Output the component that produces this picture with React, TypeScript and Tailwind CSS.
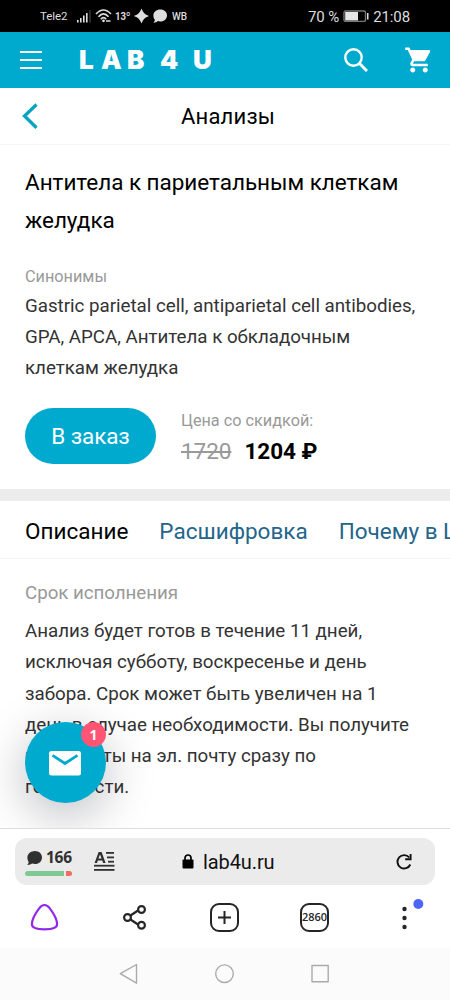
import React from "react";

const synonyms = [
  "Gastric parietal cell, antiparietal cell antibodies,",
  "GPA, APCA, Антитела к обкладочным",
  "клеткам желудка",
];

const description = [
  "Анализ будет готов в течение 11 дней,",
  "исключая субботу, воскресенье и день",
  "забора. Срок может быть увеличен на 1",
  "день в случае необходимости. Вы получите",
  "результаты на эл. почту сразу по",
  "готовности.",
];

function StatusBar() {
  return (
    <div className="flex h-8 shrink-0 items-center bg-black pl-10 text-[#dedede]">
      <span className="w-[37px] pt-px text-[11.500px] tracking-[-0.1px]">Tele2</span>
      <svg className="h-8 w-[90px] shrink-0" viewBox="77 0 90 32" fill="#dedede">
        <rect x="77" y="20" width="1.6" height="2.5" />
        <rect x="80" y="18" width="1.6" height="4.5" />
        <rect x="83" y="15.5" width="1.6" height="7" />
        <rect x="86" y="13" width="1.6" height="9.5" />
        <rect x="89.5" y="10" width="1" height="12.5" fill="#555" />
        <g fill="none" stroke="#dedede" strokeWidth="1.7">
          <path d="M96 14Q103.5 6 111 14" />
          <path d="M98.5 16.700Q103.5 11 108.500 16.700" />
          <path d="M100.8 19.200Q103.5 16.200 106.200 19.200" />
        </g>
        <circle cx="103.5" cy="20.8" r="1.4" />
        <path d="M106 21h4.500" stroke="#dedede" strokeWidth="1.500" fill="none" />
        <text x="115" y="20.300" fontSize="11.500" fontWeight="700" fontFamily="Roboto, sans-serif" textLength="15.500" lengthAdjust="spacingAndGlyphs">13º</text>
        <path d="M141.500 8.500C143.300 12.900 144.600 14.200 149 16C144.600 17.800 143.300 19.100 141.500 23.500C139.700 19.100 138.400 17.800 134 16C138.400 14.200 139.700 12.900 141.500 8.500Z" />
        <path d="M160.300 9.500c4 0 6.700 2.600 6.700 5.900 0 3.400-2.800 6-6.700 6-.9 0-1.800-.2-2.500-.4-1 1-2.500 1.700-4.500 1.700 1-.9 1.500-1.800 1.600-2.900-1-1.100-1.500-2.500-1.500-4.400 0-3.300 3-5.900 6.900-5.900Z" />
      </svg>
      <span className="ml-[5px] pt-px text-[10px] font-medium">WB</span>
      <div className="ml-auto flex items-center pr-[40px] text-[15px] leading-4 tracking-[-0.100px]">
        <span className="mr-[4px] pt-px whitespace-pre">70 %</span>
        <svg className="h-3 w-[26px]" viewBox="0 0 26 12">
          <rect x="1" y="1" width="21.500" height="10.500" rx="1.500" fill="none" stroke="#777" strokeWidth="1.400" />
          <rect x="2.200" y="2" width="12.800" height="8.500" fill="#e6e6e6" />
          <rect x="24" y="3" width="1.500" height="6.500" fill="#dedede" />
        </svg>
        <span className="ml-[4px] pt-px">21:08</span>
      </div>
    </div>
  );
}

function Header() {
  return (
    <header className="flex h-14 shrink-0 items-center bg-[#00aace] pl-5 text-white">
      <svg className="h-[19px] w-[22px]" viewBox="0 0 22 19" fill="white">
        <rect y="0" width="22" height="2" />
        <rect y="8" width="22" height="2" />
        <rect y="16" width="22" height="2" />
      </svg>
      <div className="ml-[37px] flex h-7 items-center font-['Inter',sans-serif] text-[26px] leading-7 font-black">
        <span className="w-[22px]">L</span>
        <span className="w-[26px]">A</span>
        <span className="w-[33px]">B</span>
        <span className="w-[33px]">4</span>
        <span className="w-[21px]">U</span>
      </div>
      <svg className="ml-[130px] h-6 w-6" viewBox="0 0 24 24" fill="none" stroke="white" strokeWidth="2.400">
        <circle cx="9.500" cy="9.500" r="8.200" />
        <path d="M15.500 15.500 23 23" strokeWidth="3" />
      </svg>
      <svg className="ml-[36px] h-[30px] w-[30px]" viewBox="0 0 24 24" fill="white">
        <path d="M7 18c-1.100 0-1.990.9-1.990 2S5.900 22 7 22s2-.9 2-2-.9-2-2-2zM1 2v2h2l3.600 7.590-1.350 2.450c-.16.280-.25.610-.25.960 0 1.100.9 2 2 2h12v-2H7.420c-.14 0-.25-.11-.25-.25l.03-.12.900-1.630h7.450c.75 0 1.410-.41 1.750-1.030l3.580-6.490A1.003 1.003 0 0 0 20 4H5.210l-.94-2H1zm16 16c-1.100 0-1.990.9-1.990 2s.89 2 1.990 2 2-.9 2-2-.9-2-2-2z" />
      </svg>
    </header>
  );
}

function BrowserBar() {
  return (
    <footer className="shrink-0 border-t border-[#dedede] bg-white">
      <div className="mx-[15px] mt-[9px] flex h-[47px] items-center rounded-xl bg-[#ebebeb]">
        <div className="ml-[10px] flex w-[50px] flex-col">
          <div className="flex h-5 items-center gap-1 pl-[2px] text-[#303030]">
            <svg className="h-[14px] w-[15px]" viewBox="0 0 15 14" fill="#303030">
              <path d="M8 0c4 0 7 2.800 7 6.400S12 13 8 13c-1 0-2-.2-2.900-.5C4 13.400 2.200 14 .2 13.900 1.200 13 1.700 12 1.600 10.700.8 9.600.4 8.100.4 6.400.4 2.800 4 0 8 0Z" />
            </svg>
            <span className="pt-px font-['Open_Sans'] text-[15.500px] font-bold tracking-[-0.3px]">166</span>
          </div>
          <div className="mt-[3px] flex h-[5px] w-[47px] gap-[2px]">
            <div className="w-[39px] rounded-l-full bg-[#7fca94]" />
            <div className="w-[6px] rounded-r-full bg-[#ed6e5e]" />
          </div>
        </div>
        <svg className="ml-[19px] h-[21px] w-[21px]" viewBox="0 0 21 21" fill="#303030">
          <path d="M4.600 1h3l4 11h-2.500l-.8-2.500h-4.500L3 12H.6ZM6 3.600 4.400 7.600h3.200Z" fillRule="evenodd" />
          <rect x="12" y="1" width="8" height="1.800" />
          <rect x="13" y="5.500" width="7" height="1.800" />
          <rect x="14" y="9.800" width="6" height="1.800" />
          <rect y="13.800" width="20.500" height="1.800" />
          <rect y="18" width="20.500" height="1.800" />
        </svg>
        <svg className="ml-[67px] h-[15px] w-[12px]" viewBox="0 0 12 15">
          <rect x="0.500" y="5.500" width="11" height="9" rx="1" />
          <path d="M3 6V4a3 3 0 0 1 6 0v2" fill="none" stroke="black" strokeWidth="1.700" />
        </svg>
        <span className="ml-[9px] w-[73px] text-[20px] tracking-[-0.100px] whitespace-nowrap text-[#111]">lab4u.ru</span>
        <svg className="ml-[118.500px] h-[18px] w-[18px]" viewBox="0 0 18 18" fill="none" stroke="#111" strokeWidth="1.900">
          <path d="M14.300 4.500A6.700 6.700 0 1 0 15.300 11.500" />
          <path d="M15.600 1v5.300H10.200" />
        </svg>
      </div>
      <div className="flex h-[63px] pt-px pr-px">
        <div className="flex w-[89px] items-center justify-center">
          <svg className="h-[28px] w-[29px]" viewBox="0 0 29 28" fill="none" stroke="#9028ed" strokeWidth="2.200">
            <path d="M14.500 2c-2.200 0-3.600 1-5.300 3.300C5.800 9.700 1.900 16.500 1.900 21.300c0 4 4.500 5 12.600 5s12.600-1 12.600-5c0-4.800-3.900-11.600-7.300-16C18.100 3 16.700 2 14.500 2Z" />
          </svg>
        </div>
        <div className="flex w-[90px] items-center justify-center pl-[2px]">
          <svg className="h-[26px] w-[26px]" viewBox="0 0 26 26" fill="none" stroke="#252525" strokeWidth="2.200">
            <path d="m8.500 11.500 7.500-5m-7.500 9 7.500 5" />
            <circle cx="5.500" cy="13.500" r="3.400" />
            <circle cx="19.500" cy="5.500" r="3.400" />
            <circle cx="19.500" cy="21.200" r="3.400" />
          </svg>
        </div>
        <div className="flex w-[90px] items-center justify-center pt-px pl-px">
          <div className="flex h-[29px] w-[29px] items-center justify-center rounded-[9px] border-2 border-[#252525]">
            <svg className="h-[13px] w-[13px]" viewBox="0 0 13 13" stroke="#252525" strokeWidth="2">
              <path d="M0 6.500h13M6.500 0v13" />
            </svg>
          </div>
        </div>
        <div className="flex w-[90px] items-center justify-center pt-px pl-px">
          <div className="flex h-[29px] w-[29px] items-center justify-center rounded-[9px] border-2 border-[#252525] font-['Open_Sans'] text-[11px] font-semibold text-[#252525]">
            2860
          </div>
        </div>
        <div className="flex w-[90px] items-center justify-center pt-[2px]">
          <svg className="h-[44px] w-[40px]" viewBox="0 0 40 44">
            <g fill="#252525">
              <circle cx="20.500" cy="13" r="2.200" />
              <circle cx="20.500" cy="22" r="2.200" />
              <circle cx="20.500" cy="31" r="2.200" />
            </g>
            <circle cx="34.300" cy="8" r="5" fill="#4c66f5" />
          </svg>
        </div>
      </div>
      <div className="flex h-[52px] bg-[#fbfbfb] pl-[84px]">
        <svg className="h-[52px] w-[282px]" viewBox="84 948 282 52" fill="none" stroke="#aaa" strokeWidth="1.400" strokeLinejoin="round">
          <path d="M120.300 973.700 136.500 964.500V983.200Z" />
          <circle cx="224.500" cy="973.700" r="8.800" />
          <rect x="312" y="965.500" width="16.200" height="16.200" />
        </svg>
      </div>
    </footer>
  );
}

export default function App() {
  return (
    <div className="relative flex h-[1000px] w-[450px] flex-col overflow-hidden bg-white font-[Roboto,sans-serif] text-black">
      <StatusBar />
      <Header />
      <div className="flex h-[57px] shrink-0 items-center border-b border-[#f5f5f5]">
        <svg className="ml-[21px] h-[26px] w-[18px]" viewBox="0 0 18 26" fill="none" stroke="#08a2c3" strokeWidth="3.300">
          <path d="M15.500 1.500 3.500 13l12 11.800" />
        </svg>
        <h1 className="ml-[142px] pt-px text-[22px] tracking-[0.200px]">Анализы</h1>
      </div>
      <main className="flex min-h-0 grow flex-col overflow-hidden">
        <section className="h-[344px] shrink-0 pt-[19px] pl-[25px] whitespace-nowrap">
          <h2 className="text-[22.500px] leading-[37.500px] tracking-[-0.030px]">
            Антитела к париетальным клеткам
            <br />
            желудка
          </h2>
          <p className="mt-[28px] text-[16.250px] leading-[20px] text-[#999]">Синонимы</p>
          <div className="mt-[3.500px] text-[18.750px] leading-[31.250px] tracking-[-0.020px] text-[#333]">
            {synonyms.map((line) => (
              <p key={line}>{line}</p>
            ))}
          </div>
          <div className="mt-[23.500px] flex">
            <button className="h-14 w-[131px] rounded-full bg-[#00aace] pt-[2px] text-[22.500px] tracking-[-0.100px] text-white">В заказ</button>
            <div className="ml-[25px] pt-[3px]">
              <p className="text-[16.250px] leading-5 text-[#999]">Цена со скидкой:</p>
              <p className="mt-[5px] flex text-[22.500px] leading-[30px] tracking-[-0.050px]">
                <s className="w-[63.500px] text-[#999]">1720</s>
                <b>1204 ₽</b>
              </p>
            </div>
          </div>
        </section>
        <div className="h-3 shrink-0 bg-[#ececec]" />
        <nav className="flex h-[58px] shrink-0 items-center gap-[31px] border-b border-[#f5f5f5] pt-[5px] pl-[25px] text-[22.500px] whitespace-nowrap text-[#24658a]">
          <span className="text-black">Описание</span>
          <span>Расшифровка</span>
          <span>Почему в LAB4U</span>
        </nav>
        <section className="pt-[22px] pl-[25px] whitespace-nowrap">
          <h3 className="text-[18.750px] leading-6 tracking-[-0.050px] text-[#999]">Срок исполнения</h3>
          <div className="mt-[11px] text-[18.750px] leading-[31.250px] tracking-[-0.020px] text-[#333]">
            {description.map((line) => (
              <p key={line}>{line}</p>
            ))}
          </div>
        </section>
        <button className="absolute top-[722px] left-[25px] flex h-[81px] w-[81px] items-center justify-center rounded-full bg-[#00aace] shadow-[0_12px_50px_rgba(0,10,30,0.280)]">
          <svg className="mt-[2px] mr-px h-[25px] w-[32px]" viewBox="0 0 32 25">
            <rect width="32" height="24.500" rx="2.500" fill="white" />
            <path d="m3.500 4.300 12.500 8.200 12.500-8.200" fill="none" stroke="#00aace" strokeWidth="2.800" />
          </svg>
          <span className="absolute top-0 left-[56px] flex h-[25px] w-[25px] items-center justify-center rounded-full bg-[#ff5575] font-['Open_Sans'] text-[14px] font-bold text-white">1</span>
        </button>
      </main>
      <div className="relative">
        <BrowserBar />
      </div>
    </div>
  );
}
